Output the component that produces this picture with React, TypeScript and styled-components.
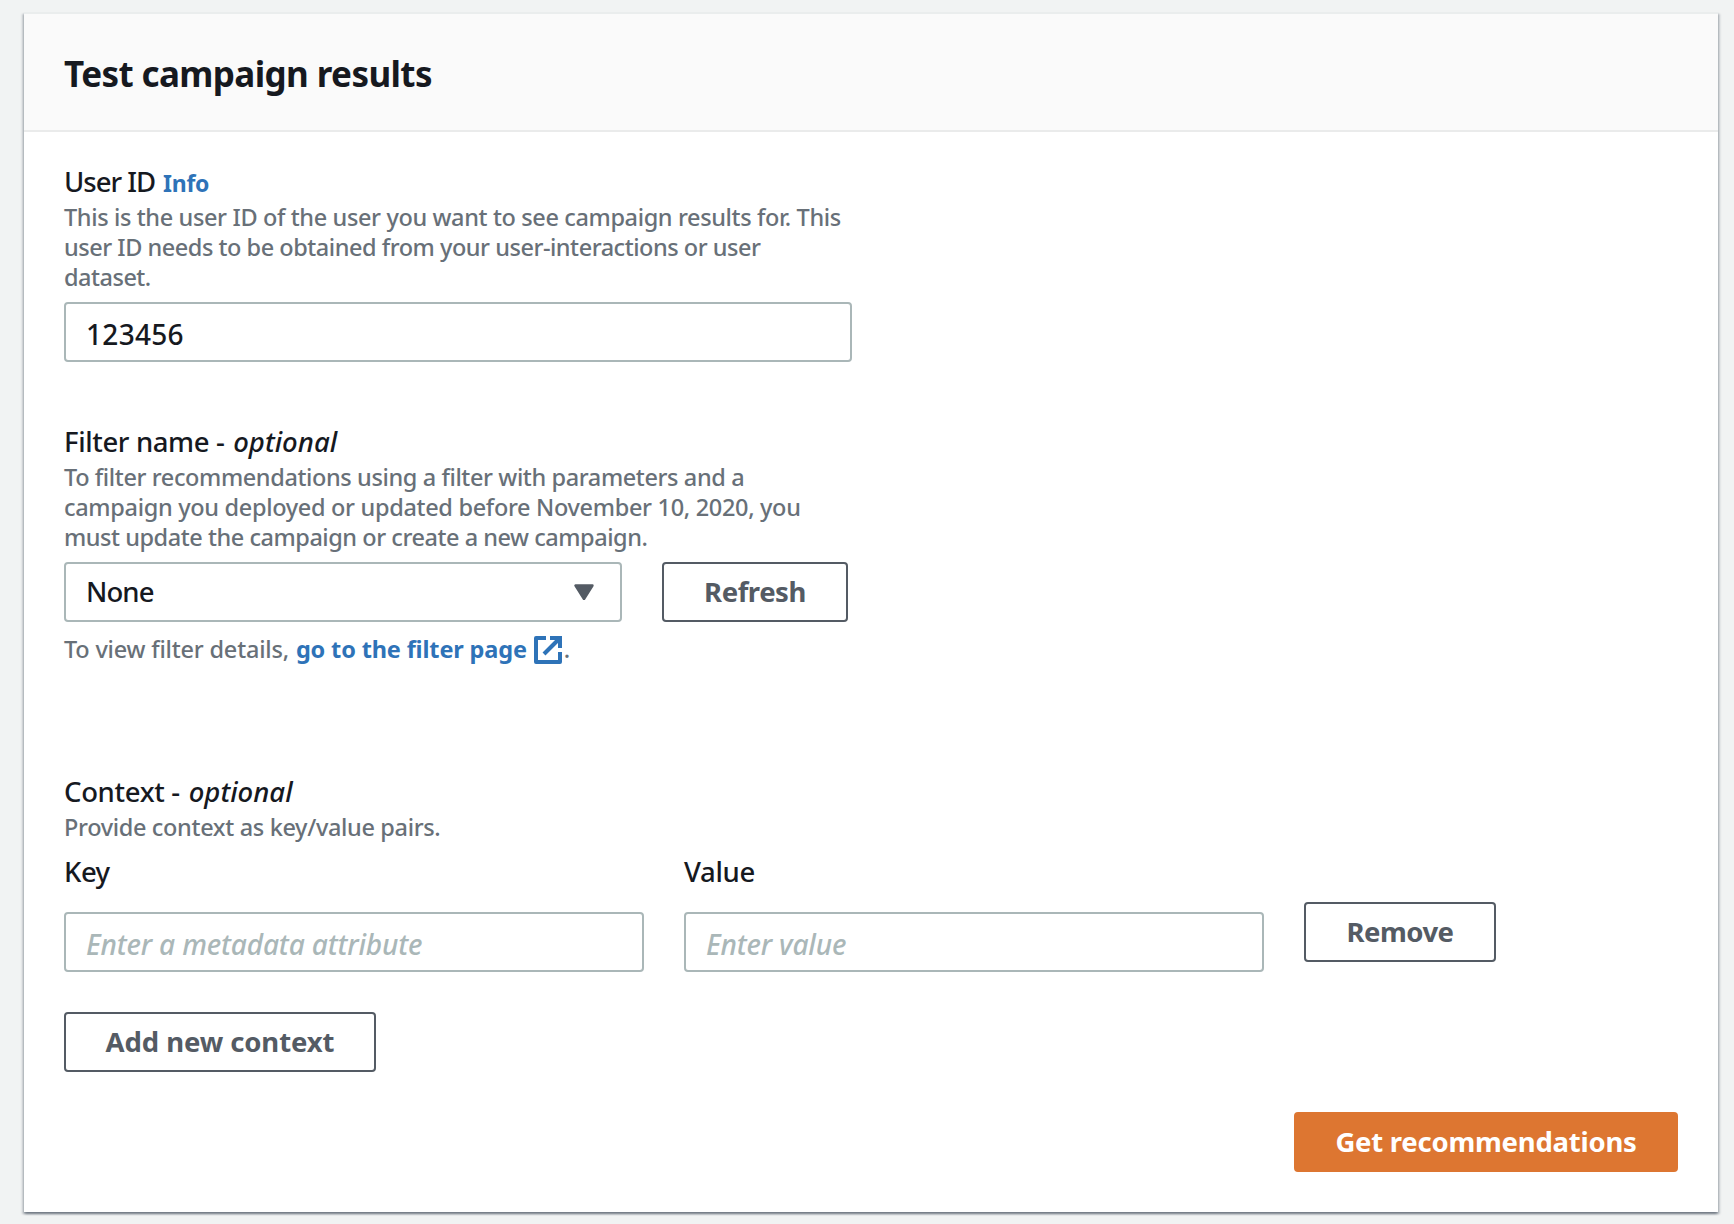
import React from "react";
import styled, { createGlobalStyle } from "styled-components";

const GlobalStyle = createGlobalStyle`
  * { box-sizing: border-box; }
  body {
    margin: 0;
    background: #f1f3f3;
    color: #16191f;
    font-family: "Noto Sans", "Open Sans", sans-serif;
    font-weight: 500;
  }
`;

const Page = styled.main`
  min-height: 1224px;
  padding: 12px 16px 12px 24px;
`;

const Card = styled.section`
  width: 1694px;
  height: 1200px;
  display: flex;
  flex-direction: column;
  background: #ffffff;
  border-top: 2px solid #eaeded;
  box-shadow:
    0 2px 2px 0 rgba(10, 24, 40, 0.34),
    2px 2px 2px 0 rgba(10, 24, 40, 0.17),
    -2px 2px 2px 0 rgba(10, 24, 40, 0.17);
`;

const CardHeader = styled.header`
  height: 118px;
  display: flex;
  align-items: center;
  padding: 3px 40px 0;
  background: #fafafa;
  border-bottom: 2px solid #eaebeb;
`;

const Title = styled.h2`
  margin: 0;
  font-size: 35px;
  line-height: 44px;
  font-weight: 700;
`;

const CardBody = styled.div`
  flex: 1;
  display: flex;
  flex-direction: column;
  padding: 30px 40px 40px;
`;

const Field = styled.div<{ $gap: number }>`
  display: flex;
  flex-direction: column;
  margin-bottom: ${(p) => p.$gap}px;
`;

const Label = styled.label`
  height: 40px;
  font-size: 27.5px;
  line-height: 40px;
  white-space: pre;
`;

const Track = styled.span<{ $track: number }>`
  letter-spacing: ${(p) => p.$track}px;
`;

const Optional = styled.em`
  margin-left: 2px;
  font-style: italic;
`;

const InfoLink = styled.a`
  margin-left: 8px;
  font-size: 23px;
  font-weight: 700;
  letter-spacing: -0.3px;
  color: #2e73b8;
`;

const Description = styled.p`
  margin: 0 0 10px;
  font-size: 23.5px;
  line-height: 30px;
  color: #687078;
`;

const Line = styled.span<{ $track: number }>`
  display: block;
  white-space: pre;
  letter-spacing: ${(p) => p.$track}px;
`;

const Input = styled.input<{ $width: number }>`
  width: ${(p) => p.$width}px;
  height: 60px;
  padding: 3px 20px 0;
  border: 2px solid #aab7b8;
  border-radius: 4px;
  background: #ffffff;
  color: #16191f;
  font: inherit;
  font-size: 28px;
  letter-spacing: 0.3px;
  outline: none;

  &::placeholder {
    color: #aab7b8;
    font-style: italic;
    letter-spacing: -0.16px;
    opacity: 1;
  }
`;

const Row = styled.div`
  display: flex;
  gap: 40px;
`;

const Select = styled.div`
  width: 558px;
  height: 60px;
  display: flex;
  align-items: center;
  justify-content: space-between;
  padding: 0 26px 1px 20px;
  border: 2px solid #aab7b8;
  border-radius: 4px;
  font-size: 27.5px;
  letter-spacing: -0.9px;
`;

const Button = styled.button<{ $width: number; $track: number; $primary?: boolean }>`
  width: ${(p) => p.$width}px;
  height: 60px;
  flex: none;
  padding: 0 0 2px;
  border: 2px solid ${(p) => (p.$primary ? "#dd7631" : "#545b64")};
  border-radius: 4px;
  background: ${(p) => (p.$primary ? "#dd7631" : "#ffffff")};
  color: ${(p) => (p.$primary ? "#ffffff" : "#545b64")};
  font-family: inherit;
  font-size: 27.5px;
  font-weight: 700;
  letter-spacing: ${(p) => p.$track}px;
  white-space: nowrap;
`;

const Hint = styled.div`
  display: flex;
  height: 30px;
  margin-top: 12px;
  font-size: 23.5px;
  line-height: 30px;
  color: #687078;
  white-space: pre;
`;

const HintLink = styled.a`
  display: flex;
  align-items: flex-start;
  margin-left: 7px;
  color: #2e73b8;
  font-weight: 700;
  letter-spacing: -0.15px;

  svg {
    margin: 2px 2px 0 7px;
  }
`;

const PairColumn = styled.div`
  display: flex;
  flex-direction: column;
  gap: 20px;
`;

const RemoveSlot = styled.div`
  padding-top: 50px;
`;

const Actions = styled.div`
  display: flex;
  justify-content: flex-end;
  margin-top: 40px;
`;

function CaretIcon() {
  return (
    <svg width="20" height="16" viewBox="0 0 20 16">
      <path d="M1.5 1.5h17L10 15z" fill="#545b64" stroke="#545b64" strokeWidth="2.4" strokeLinejoin="round" />
    </svg>
  );
}

function ExternalIcon() {
  return (
    <svg width="28" height="28" viewBox="0 0 28 28" fill="none" stroke="#2e73b8" strokeWidth="4">
      <path d="M12 2H2v24h24V16" strokeLinejoin="round" />
      <path d="M16 2h10v10" />
      <path d="M26 2L10 18" />
    </svg>
  );
}

export default function App() {
  return (
    <>
      <GlobalStyle />
      <Page>
        <Card>
          <CardHeader>
            <Title><Track $track={-0.6}>Test campaign results</Track></Title>
          </CardHeader>
          <CardBody>
            <Field $gap={60}>
              <Label>
                <Track $track={-1}>User ID</Track>
                <InfoLink>Info</InfoLink>
              </Label>
              <Description>
                <Line $track={-0.37}>This is the user ID of the user you want to see campaign results for. This</Line>
                <Line $track={-0.47}>user ID needs to be obtained from your user-interactions or user</Line>
                <Line $track={-0.5}>dataset.</Line>
              </Description>
              <Input $width={788} defaultValue="123456" />
            </Field>

            <Field $gap={108}>
              <Label>
                <Track $track={-0.37}>Filter name - </Track>
                <Optional>optional</Optional>
              </Label>
              <Description>
                <Line $track={-0.39}>To filter recommendations using a filter with parameters and a</Line>
                <Line $track={-0.32}>campaign you deployed or updated before November 10, 2020, you</Line>
                <Line $track={-0.46}>must update the campaign or create a new campaign.</Line>
              </Description>
              <Row>
                <Select>
                  None
                  <CaretIcon />
                </Select>
                <Button $width={186} $track={-0.45}>Refresh</Button>
              </Row>
              <Hint>
                <Track $track={-0.2}>To view filter details,</Track>
                <HintLink>
                  go to the filter page
                  <ExternalIcon />
                </HintLink>
                .
              </Hint>
            </Field>

            <Field $gap={40}>
              <Label>
                <Track $track={-0.32}>Context - </Track>
                <Optional>optional</Optional>
              </Label>
              <Description>
                <Line $track={-0.34}>Provide context as key/value pairs.</Line>
              </Description>
              <Row>
                <PairColumn>
                  <Label><Track $track={-0.5}>Key</Track></Label>
                  <Input $width={580} placeholder="Enter a metadata attribute" />
                </PairColumn>
                <PairColumn>
                  <Label><Track $track={-0.3}>Value</Track></Label>
                  <Input $width={580} placeholder="Enter value" />
                </PairColumn>
                <RemoveSlot>
                  <Button $width={192} $track={-0.5}>Remove</Button>
                </RemoveSlot>
              </Row>
            </Field>

            <Button $width={312} $track={-0.1}>Add new context</Button>
            <Actions>
              <Button $width={384} $track={-0.24} $primary>Get recommendations</Button>
            </Actions>
          </CardBody>
        </Card>
      </Page>
    </>
  );
}
